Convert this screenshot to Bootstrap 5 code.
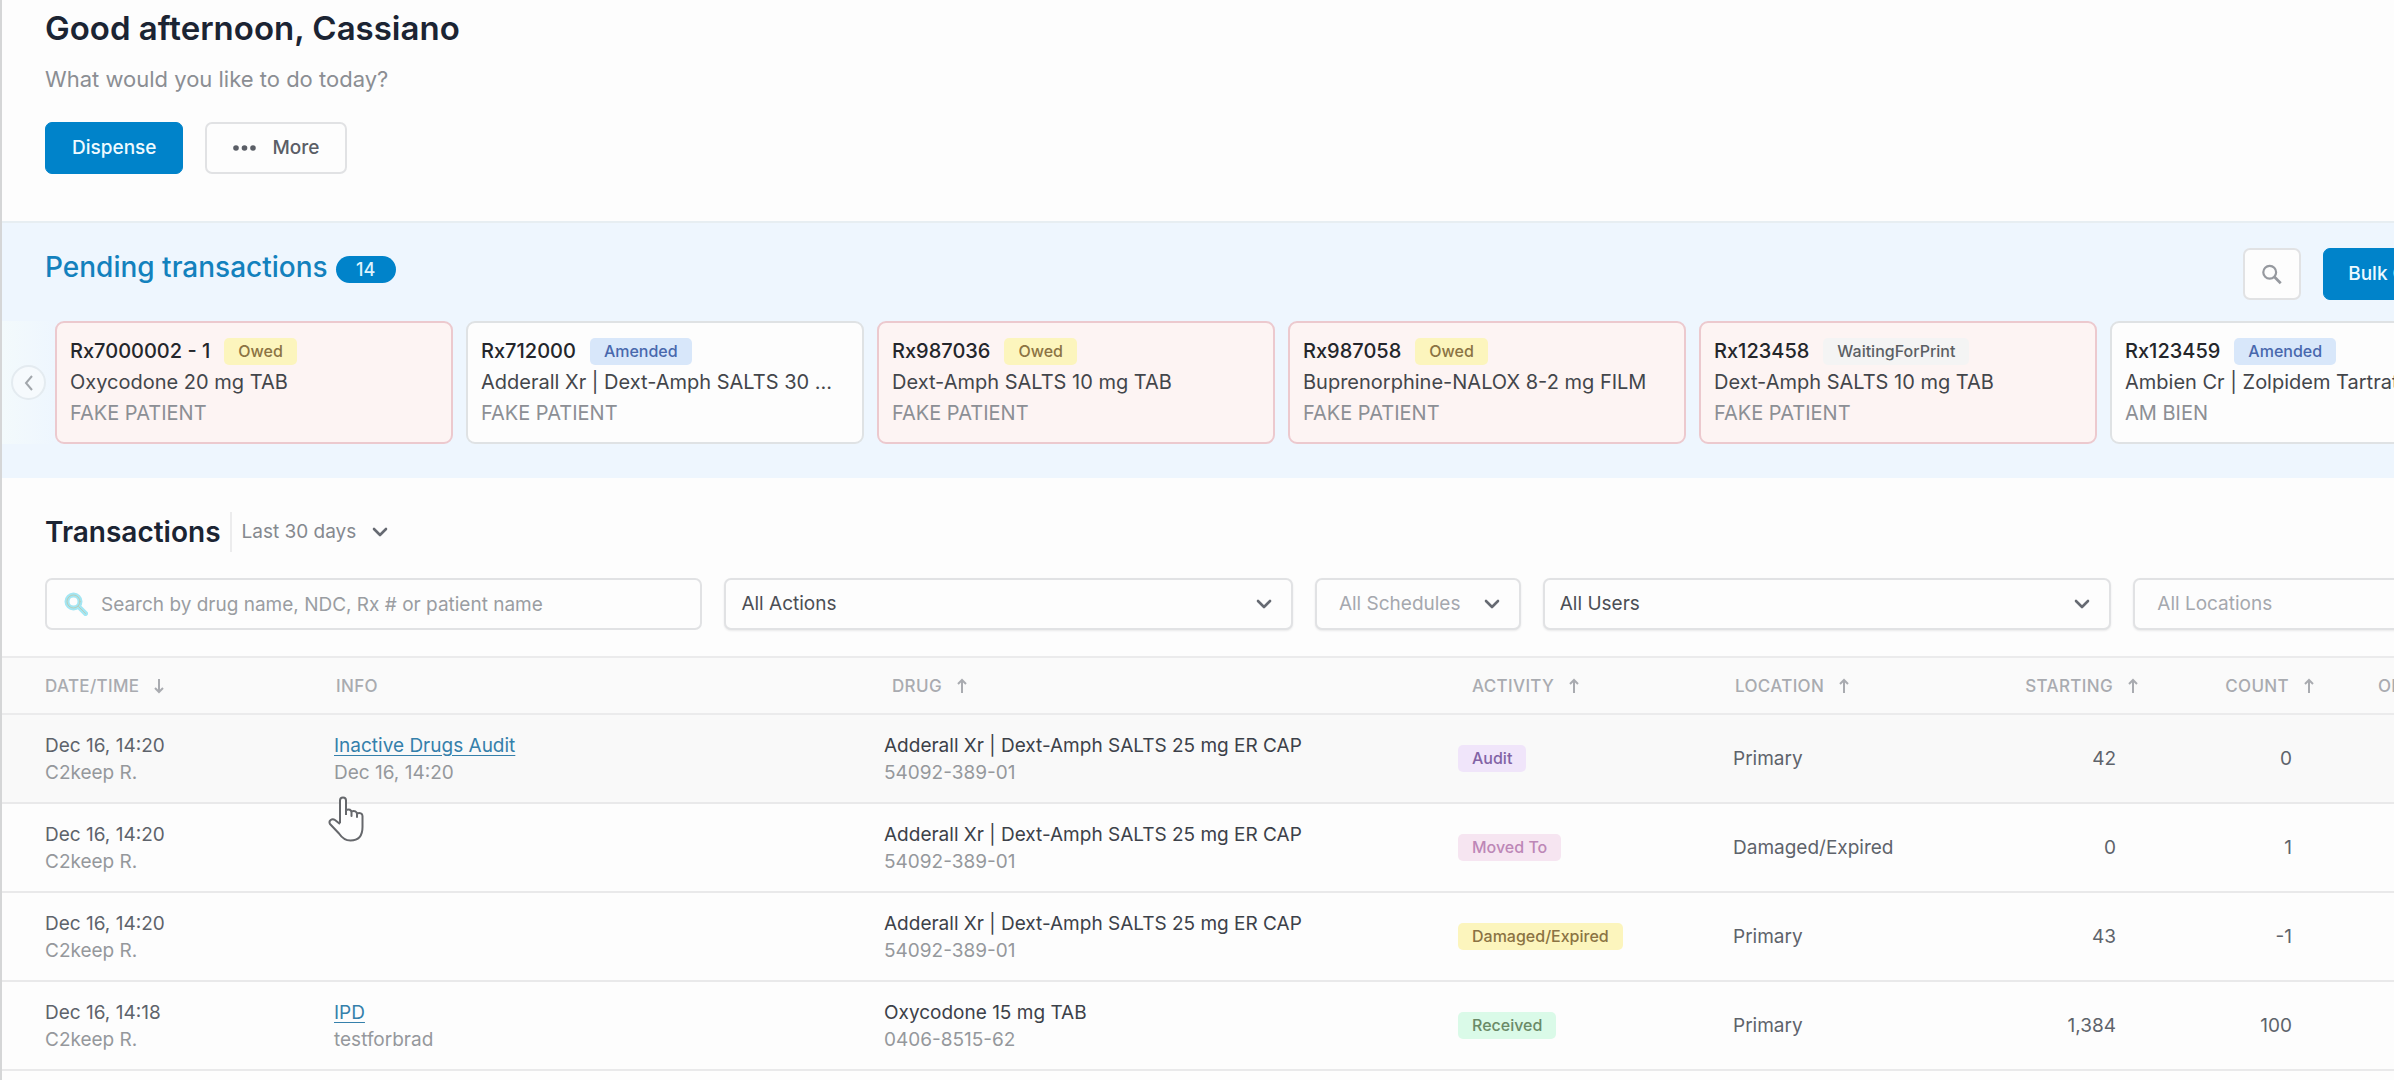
<!DOCTYPE html>
<html lang="en">
<head>
<meta charset="utf-8">
<meta name="viewport" content="width=device-width, initial-scale=1">
<title>Dashboard</title>
<link rel="stylesheet" href="https://cdn.jsdelivr.net/npm/bootstrap@5.3.0/dist/css/bootstrap.min.css">
<style>
  :root { --brand: #0083ca; }
  body { font-family: Inter, "Liberation Sans", sans-serif; font-size: 19px; line-height: 27px; color: #4b5057; background: #fdfdfd; overflow: hidden; }
  .dash { border-left: 2px solid #d5d6d7; width: calc(100% + 156px); min-height: 100vh; }
  .dash-pad { padding-left: 43px; padding-right: 45px; }
  .greet { height: 221px; padding-top: 8px; }
  .greet h1 { font-size: 33px; line-height: 40px; font-weight: 600; color: #1b2433; margin: 0 0 16px; }
  .greet p { font-size: 22px; line-height: 30px; color: #8b8e93; margin: 0 0 28px; }
  .btn-row { gap: 22px; }
  .dash-btn { height: 52px; font-size: 19px; font-weight: 500; border-radius: 7px; padding: 0 26px; }
  .dash-btn.btn-primary { --bs-btn-bg: var(--brand); --bs-btn-border-color: var(--brand); --bs-btn-color: #eefaff; }
  .dash-btn.btn-plain { background: #fdfdfd; border: 2px solid #e1e2e4; color: #5a5e66; }
  .dash-btn.bulk-btn { padding: 0 24px; }
  .pending { background: #eef6fe; border-top: 2px solid #e7eef2; height: 257px; padding-top: 25px; }
  .sect-title { font-size: 28px; line-height: 36px; font-weight: 600; margin: 0; }
  .pending .sect-title { color: #1381bd; font-weight: 500; }
  .pend-head { padding-top: 1px; }
  .tally { background: var(--brand); color: #dff3fd; font-size: 18px; line-height: 27px; font-weight: 500; width: 60px; border-radius: 14px; text-align: center; margin-top: 4px; }
  .dash-btn.search-btn { width: 58px; padding: 0; color: #96999f; }
  .deck { margin-top: 21px; }
  .deck-nav { width: 53px; background: linear-gradient(90deg, #f3fafc, #eef6fe); }
  .round-btn { width: 35px; height: 35px; border: 2px solid #e4ebf0; border-radius: 50%; background: #f6fafd; color: #a2a7ac; padding: 0; }
  .deck-list { gap: 13px; }
  .rx { flex: 0 0 398px; height: 123px; border: 2px solid #dfe2e4; border-radius: 9px; background: #fdfdfd; padding: 13px 13px 0; font-size: 20px; line-height: 31px; color: #43464b; }
  .rx.alerted { background: #fdf4f3; border-color: #ecc9ce; }
  .rx-top { gap: 14px; }
  .rx strong { font-weight: 500; color: #24262b; }
  .rx .who { color: #8c8f95; }
  .tag { display: inline-block; font-size: 16px; line-height: 27px; height: 27px; font-weight: 500; padding: 0 14px; border-radius: 5px; vertical-align: top; }
  .tag-yellow { background: #fcf5bd; color: #8b7343; }
  .tag-blue { background: #d8e7fa; color: #4868ad; }
  .tag-grey { background: #f4f4f4; color: #5b5f64; }
  .tag-purple { background: #f0e5fa; color: #8263a5; }
  .tag-pink { background: #f6e5f1; color: #bd87b7; }
  .tag-green { background: #dafae8; color: #6a8a67; }
  .trans-head { padding-top: 34px; }
  .trans-head .sect-title { color: #1b2433; }
  .range-box { border-left: 2px solid #ececed; height: 40px; margin-left: 9px; padding-left: 10px; }
  .form-select.range-pick { width: auto; border: 0; background-color: transparent; padding: 0 32px 0 0; line-height: 40px; font-size: 19px; color: #85898f; background-position: right 1px center; }
  .form-select { background-image: url("data:image/svg+xml,%3Csvg xmlns='http://www.w3.org/2000/svg' viewBox='0 0 16 16'%3E%3Cpath d='M2 5l6 6 6-6' fill='none' stroke='%23666a72' stroke-width='2.6' stroke-linecap='round' stroke-linejoin='round'/%3E%3C/svg%3E"); background-size: 16px 16px; }
  .filters { gap: 22px; padding-top: 26px; padding-bottom: 26px; }
  .filters > * { min-width: 0; }
  .f-search { flex: 658 1 658px; }
  .f-wide { flex: 569 1 569px; }
  .f-narrow { flex: 206 1 206px; }
  .f-mid { flex: 372 1 372px; }
  .filters .form-select, .filters .form-control { height: 52px; font-size: 19px; border: 2px solid #e1e2e4; border-radius: 7px; background-color: #fdfdfd; color: #4b4e54; padding: 0 40px 0 15px; background-position: right 19px center; }
  .filters .form-select { box-shadow: 0 1px 2px #e9e9ea; }
  .filters .form-select.dim { color: #a5a8ae; padding-left: 22px; }
  .filters .form-control { padding-left: 54px; padding-right: 12px; }
  .filters .form-control::placeholder { color: #9a9da2; }
  .f-icon { left: 19px; top: 14px; }
  .log { table-layout: fixed; margin: 0; color: #5e636b; --bs-table-bg: transparent; }
  .log th { height: 57px; font-size: 17px; line-height: 24px; font-weight: 500; color: #a9abb0; background: #fafafa; border-top: 2px solid #ebebec; border-bottom: 2px solid #ebebec; padding: 0 6px 0 17px; vertical-align: middle; white-space: nowrap; }
  .log td { height: 89px; border-bottom: 2px solid #e9e9ea; padding: 0 15px; vertical-align: middle; }
  .log th:first-child, .log td:first-child { padding-left: 43px; }
  .log th.h-drug { padding-left: 23px; }
  .log th.h-act { padding-left: 29px; }
  .log .num { text-align: right; padding-right: 29px; }
  .log th.num { padding-right: 6px; }
  .log th.h-hand { padding-left: 57px; }
  .log tr.lit td { background: #f9f9f9; }
  .log a { color: #3580ab; text-underline-offset: 3px; }
  .log .sub { color: #95989c; }
  .log .drug { color: #3c4149; }
  .log th { letter-spacing: 0.02em; }
  .log svg { margin-left: 14px; vertical-align: -2px; }
  .c-date { width: 317px; } .c-info { width: 550px; } .c-drug { width: 574px; } .c-act { width: 275px; }
  .c-loc { width: 270px; } .c-start { width: 157px; } .c-count { width: 176px; }
  .pointer { left: 326px; top: 796px; z-index: 5; }
</style>
<script src="https://cdn.jsdelivr.net/npm/bootstrap@5.3.0/dist/js/bootstrap.bundle.min.js"></script>
</head>
<body>
<svg class="d-none" aria-hidden="true">
  <symbol id="up" viewBox="0 0 12 16"><path d="M6 15V2M2 6l4-4 4 4" fill="none" stroke="currentColor" stroke-width="2"/></symbol>
  <symbol id="down" viewBox="0 0 12 16"><path d="M6 1v13M2 10l4 4 4-4" fill="none" stroke="currentColor" stroke-width="2"/></symbol>
  <symbol id="lens" viewBox="0 0 24 24"><circle cx="9.500" cy="9" r="7" fill="none" stroke="currentColor" stroke-width="2.400"/><path d="M14.500 14l7 7" fill="none" stroke="currentColor" stroke-width="3"/></symbol>
</svg>
<main class="dash position-relative">
  <header class="greet dash-pad">
    <h1>Good afternoon, Cassiano</h1>
    <p>What would you like to do today?</p>
    <div class="btn-row d-flex">
      <button type="button" class="btn btn-primary dash-btn">Dispense</button>
      <button type="button" class="btn btn-plain dash-btn d-flex align-items-center"><svg class="me-3" width="23" height="6" viewBox="0 0 23 6" fill="currentColor" aria-hidden="true"><circle cx="3" cy="3" r="2.800"/><circle cx="11.500" cy="3" r="2.800"/><circle cx="20" cy="3" r="2.800"/></svg>More</button>
    </div>
  </header>

  <section class="pending">
    <div class="dash-pad d-flex justify-content-between align-items-start">
      <div class="pend-head d-flex align-items-center gap-2">
        <h2 class="sect-title">Pending transactions</h2><span class="tally">14</span>
      </div>
      <div class="btn-row d-flex">
        <button type="button" class="btn btn-plain dash-btn search-btn" aria-label="Search pending"><svg width="22" height="22" aria-hidden="true"><use href="#lens"/></svg></button>
        <button type="button" class="btn btn-primary dash-btn bulk-btn">Bulk Complete</button>
      </div>
    </div>
    <div class="deck d-flex overflow-hidden">
      <div class="deck-nav d-flex flex-shrink-0 align-items-center justify-content-center">
        <button type="button" class="round-btn d-flex align-items-center justify-content-center" aria-label="Previous"><svg width="10" height="18" viewBox="0 0 10 18" fill="none" stroke="currentColor" stroke-width="2" aria-hidden="true"><path d="M8 2 2 9l6 7"/></svg></button>
      </div>
      <div class="deck-list d-flex">
        <article class="rx alerted"><div class="rx-top d-flex align-items-center"><strong>Rx7000002 - 1</strong><span class="tag tag-yellow">Owed</span></div><div class="text-truncate">Oxycodone 20 mg TAB</div><div class="who">FAKE PATIENT</div></article>
        <article class="rx"><div class="rx-top d-flex align-items-center"><strong>Rx712000</strong><span class="tag tag-blue">Amended</span></div><div class="text-truncate">Adderall Xr | Dext-Amph SALTS 30 ...</div><div class="who">FAKE PATIENT</div></article>
        <article class="rx alerted"><div class="rx-top d-flex align-items-center"><strong>Rx987036</strong><span class="tag tag-yellow">Owed</span></div><div class="text-truncate">Dext-Amph SALTS 10 mg TAB</div><div class="who">FAKE PATIENT</div></article>
        <article class="rx alerted"><div class="rx-top d-flex align-items-center"><strong>Rx987058</strong><span class="tag tag-yellow">Owed</span></div><div class="text-truncate">Buprenorphine-NALOX 8-2 mg FILM</div><div class="who">FAKE PATIENT</div></article>
        <article class="rx alerted"><div class="rx-top d-flex align-items-center"><strong>Rx123458</strong><span class="tag tag-grey">WaitingForPrint</span></div><div class="text-truncate">Dext-Amph SALTS 10 mg TAB</div><div class="who">FAKE PATIENT</div></article>
        <article class="rx"><div class="rx-top d-flex align-items-center"><strong>Rx123459</strong><span class="tag tag-blue">Amended</span></div><div class="text-truncate">Ambien Cr | Zolpidem Tartrate</div><div class="who">AM BIEN</div></article>
      </div>
    </div>
  </section>

  <section>
    <div class="trans-head dash-pad d-flex align-items-center">
      <h2 class="sect-title">Transactions</h2>
      <div class="range-box"><select class="form-select range-pick" aria-label="Period"><option>Last 30 days</option></select></div>
    </div>
    <form class="filters dash-pad d-flex">
      <div class="f-search position-relative">
        <svg class="f-icon position-absolute" width="24" height="24" viewBox="0 0 24 24" fill="none" stroke-linecap="round" aria-hidden="true"><circle cx="9.500" cy="9.500" r="6.500" stroke="#a3e6f3" stroke-width="5"/><path d="M14.500 14.500l7 7" stroke="#a3e6f3" stroke-width="5"/><circle cx="9.500" cy="9.500" r="6.500" stroke="#b9cdb9" stroke-width="1"/><path d="M14.500 14.500l7 7" stroke="#b9cdb9" stroke-width="1"/></svg>
        <input class="form-control" type="search" aria-label="Search transactions" placeholder="Search by drug name, NDC, Rx # or patient name">
      </div>
      <select class="form-select f-wide" aria-label="Actions"><option>All Actions</option></select>
      <select class="form-select f-narrow dim" aria-label="Schedules"><option>All Schedules</option></select>
      <select class="form-select f-wide" aria-label="Users"><option>All Users</option></select>
      <select class="form-select f-mid dim" aria-label="Locations"><option>All Locations</option></select>
    </form>

    <table class="table log">
      <colgroup><col class="c-date"><col class="c-info"><col class="c-drug"><col class="c-act"><col class="c-loc"><col class="c-start"><col class="c-count"><col></colgroup>
      <thead>
        <tr>
          <th scope="col">DATE/TIME<svg width="12" height="16" aria-hidden="true"><use href="#down"/></svg></th>
          <th scope="col">INFO</th>
          <th scope="col" class="h-drug">DRUG<svg width="12" height="16" aria-hidden="true"><use href="#up"/></svg></th>
          <th scope="col" class="h-act">ACTIVITY<svg width="12" height="16" aria-hidden="true"><use href="#up"/></svg></th>
          <th scope="col">LOCATION<svg width="12" height="16" aria-hidden="true"><use href="#up"/></svg></th>
          <th scope="col" class="num">STARTING<svg width="12" height="16" aria-hidden="true"><use href="#up"/></svg></th>
          <th scope="col" class="num">COUNT<svg width="12" height="16" aria-hidden="true"><use href="#up"/></svg></th>
          <th scope="col" class="h-hand">ON HAND</th>
        </tr>
      </thead>
      <tbody>
        <tr class="lit"><td>Dec 16, 14:20<div class="sub">C2keep R.</div></td><td><a href="#">Inactive Drugs Audit</a><div class="sub">Dec 16, 14:20</div></td><td><div class="drug">Adderall Xr | Dext-Amph SALTS 25 mg ER CAP</div><div class="sub">54092-389-01</div></td><td><span class="tag tag-purple">Audit</span></td><td>Primary</td><td class="num">42</td><td class="num">0</td><td></td></tr>
        <tr><td>Dec 16, 14:20<div class="sub">C2keep R.</div></td><td></td><td><div class="drug">Adderall Xr | Dext-Amph SALTS 25 mg ER CAP</div><div class="sub">54092-389-01</div></td><td><span class="tag tag-pink">Moved To</span></td><td>Damaged/Expired</td><td class="num">0</td><td class="num">1</td><td></td></tr>
        <tr><td>Dec 16, 14:20<div class="sub">C2keep R.</div></td><td></td><td><div class="drug">Adderall Xr | Dext-Amph SALTS 25 mg ER CAP</div><div class="sub">54092-389-01</div></td><td><span class="tag tag-yellow">Damaged/Expired</span></td><td>Primary</td><td class="num">43</td><td class="num">-1</td><td></td></tr>
        <tr><td>Dec 16, 14:18<div class="sub">C2keep R.</div></td><td><a href="#">IPD</a><div class="sub">testforbrad</div></td><td><div class="drug">Oxycodone 15 mg TAB</div><div class="sub">0406-8515-62</div></td><td><span class="tag tag-green">Received</span></td><td>Primary</td><td class="num">1,384</td><td class="num">100</td><td></td></tr>
      </tbody>
    </table>
  </section>
  <svg class="pointer position-absolute" width="36" height="46" viewBox="0 0 36 46" fill="#fefefe" stroke="#66686c" stroke-width="2" stroke-linejoin="round" aria-hidden="true"><path d="M12 27V4.500a3 3 0 0 1 6 0V19M18 19v-5c3-1.500 5.500 0 5.500 2.500V20v-4.500c3-1.200 5.500 0 5.500 2.500v3-3.500c3-1 5.500 0 5.500 2.500v11c0 9-4 13.500-12 13.500-5 0-8.500-2.500-11.500-7L2 28c-1.800-3.500 2-6 5-4l5 4"/></svg>
</main>
</body>
</html>
